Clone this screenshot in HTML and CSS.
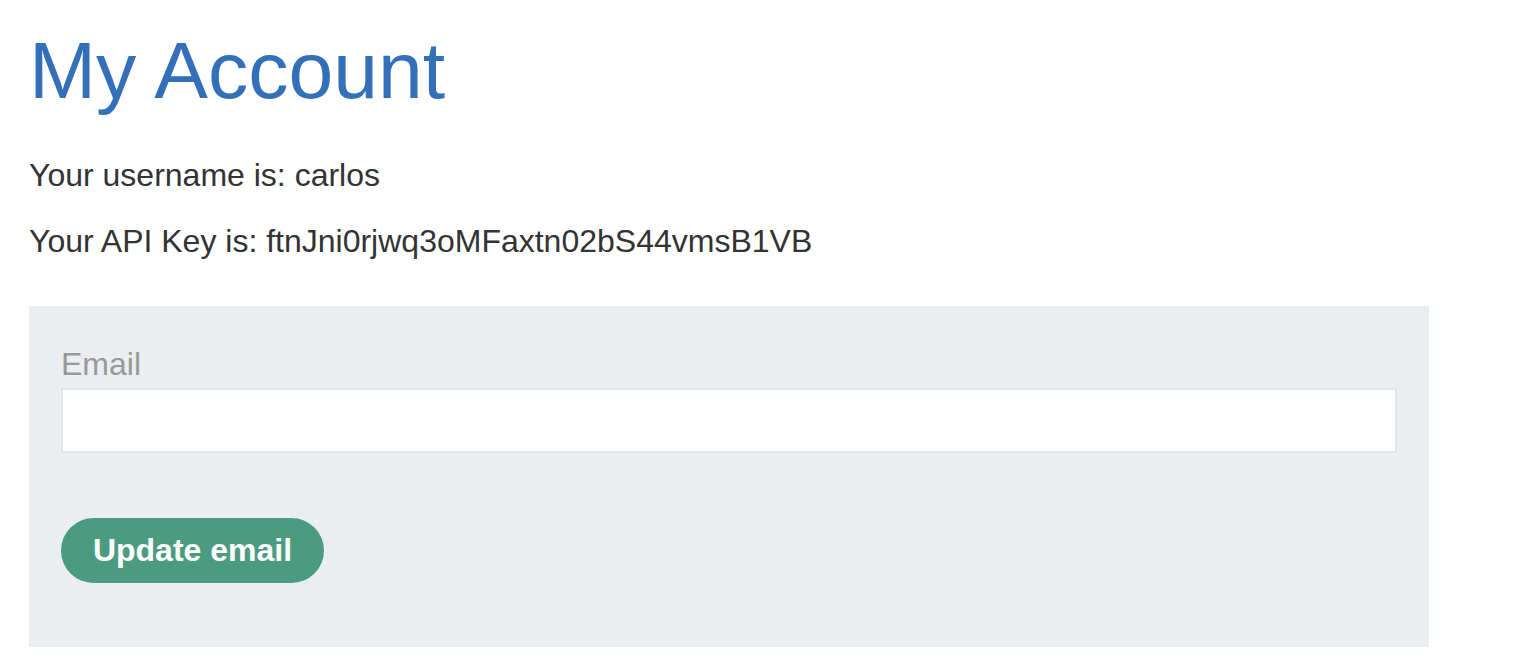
FILE: index.html
```html
<!DOCTYPE html>
<html>
<head>
<meta charset="utf-8">
<title>My Account</title>
<link rel="stylesheet" href="styles.css">
</head>
<body>
<div class="page">
  <h1 class="title">My Account</h1>
  <p class="info info-user">Your username is: carlos</p>
  <p class="info info-key">Your API Key is: ftnJni0rjwq3oMFaxtn02bS44vmsB1VB</p>
  <form class="panel">
    <label class="label" for="email">Email</label>
    <input class="field" id="email" type="email" name="email">
    <button class="btn" type="button">Update email</button>
  </form>
</div>
</body>
</html>
```

FILE: styles.css
```css
html, body {
  margin: 0;
  padding: 0;
  background: #ffffff;
}

body {
  font-family: "Liberation Sans", Arial, Helvetica, sans-serif;
  color: #333333;
}

.page {
  padding: 24px 0 0 29px;
}

.title {
  margin: 0;
  font-size: 80.5px;
  line-height: 92px;
  font-weight: normal;
  color: #3470b9;
}

.info {
  margin: 0;
  font-size: 32px;
  line-height: 36px;
}

.info-user {
  margin-top: 41px;
}

.info-key {
  margin-top: 30px;
}

.panel {
  width: 1400px;
  box-sizing: border-box;
  margin-top: 47px;
  padding: 40px 32px 64px;
  background: #eaeef1;
  display: flex;
  flex-direction: column;
  align-items: flex-start;
}

.label {
  font-size: 32px;
  line-height: 36px;
  color: #999999;
}

.field {
  margin-top: 6px;
  width: 100%;
  height: 65px;
  box-sizing: border-box;
  border: 2px solid #e3e5e6;
  background: #ffffff;
  outline: none;
  padding: 0 12px;
  font-family: inherit;
  font-size: 28px;
}

.btn {
  margin-top: 65px;
  height: 65px;
  width: 263px;
  border: none;
  border-radius: 33px;
  background: #4b9b81;
  color: #ffffff;
  font-family: inherit;
  font-weight: bold;
  font-size: 32px;
  padding: 0;
  cursor: pointer;
}
```
